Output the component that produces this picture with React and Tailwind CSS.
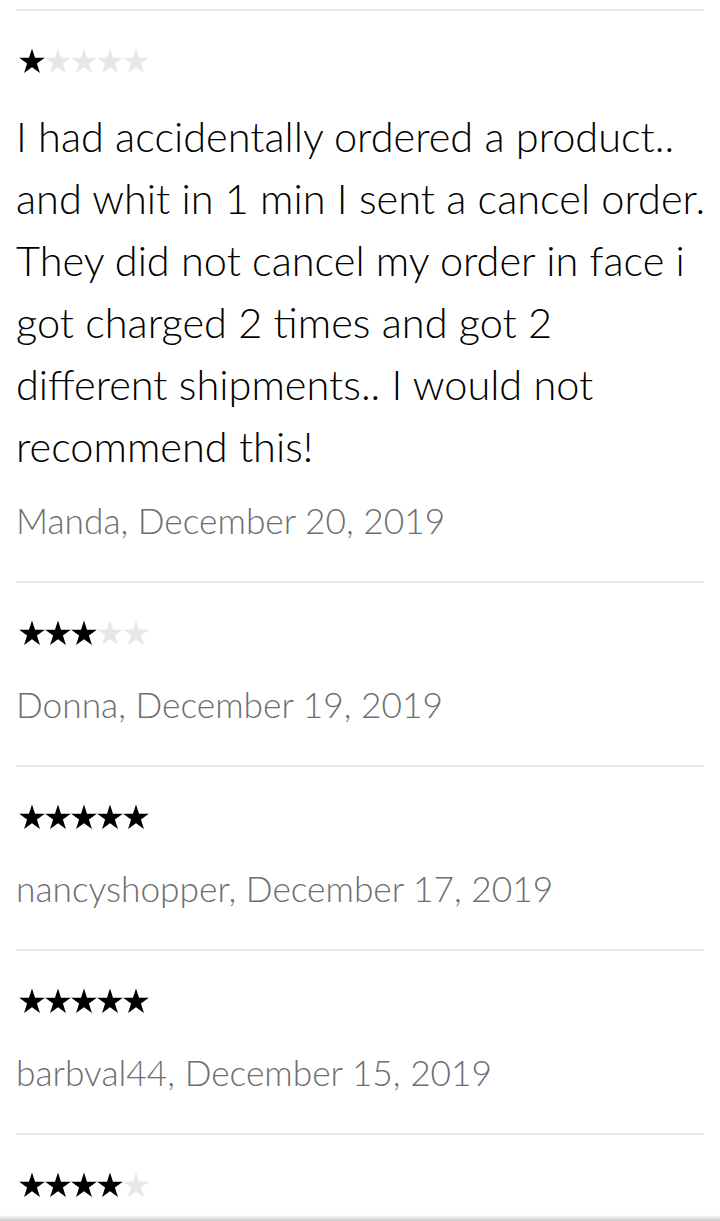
import React from 'react';

const reviews = [
  {
    rating: 1,
    lines: [
      'I had accidentally ordered a product..',
      'and whit in 1 min I sent a cancel order.',
      'They did not cancel my order in face i',
      'got charged 2 times and got 2',
      'different shipments.. I would not',
      'recommend this!',
    ],
    author: 'Manda',
    date: 'December 20, 2019',
  },
  { rating: 3, author: 'Donna', date: 'December 19, 2019' },
  { rating: 5, author: 'nancyshopper', date: 'December 17, 2019' },
  { rating: 5, author: 'barbval44', date: 'December 15, 2019' },
  { rating: 4, author: 'Maria', date: 'December 12, 2019' },
];

function Star({ filled }) {
  return (
    <svg width="26" height="26" viewBox="0 0 26 26">
      <polygon
        points="13,0.5 16.03,9.83 25.84,9.83 17.91,15.59 20.94,24.92 13,19.16 5.06,24.92 8.09,15.59 0.16,9.83 9.97,9.83"
        fill={filled ? '#000000' : '#e6e7e8'}
      />
    </svg>
  );
}

function Stars({ rating }) {
  return (
    <div className="flex h-[26px] ml-[3px]">
      {[1, 2, 3, 4, 5].map(i => <Star key={i} filled={i <= rating} />)}
    </div>
  );
}

function Review({ review }) {
  return (
    <div className="border-t-2 border-[#e6e6e6] pt-[37px] pb-[38px]">
      <Stars rating={review.rating} />
      {review.lines && (
        <p className="mt-[31px] text-[41.5px] leading-[62px] font-light text-black whitespace-nowrap">
          {review.lines.map((line, i) => (
            <React.Fragment key={i}>
              {line}
              {i < review.lines.length - 1 && <br />}
            </React.Fragment>
          ))}
        </p>
      )}
      <div className={`${review.lines ? 'mt-[22px]' : 'mt-[37px]'} text-[35.3px] leading-[44px] font-light text-[#6d6e71] whitespace-nowrap`}>
        {review.author}, {review.date}
      </div>
    </div>
  );
}

export default function App() {
  return (
    <div className="bg-white min-h-screen" style={{ fontFamily: 'Lato, sans-serif' }}>
      <div className="px-4 pt-[9px]">
        {reviews.map((r, i) => <Review key={i} review={r} />)}
      </div>
      <div className="fixed bottom-0 left-0 right-0 h-[6px] bg-gradient-to-b from-white to-[#c9c9c9]" />
    </div>
  );
}
